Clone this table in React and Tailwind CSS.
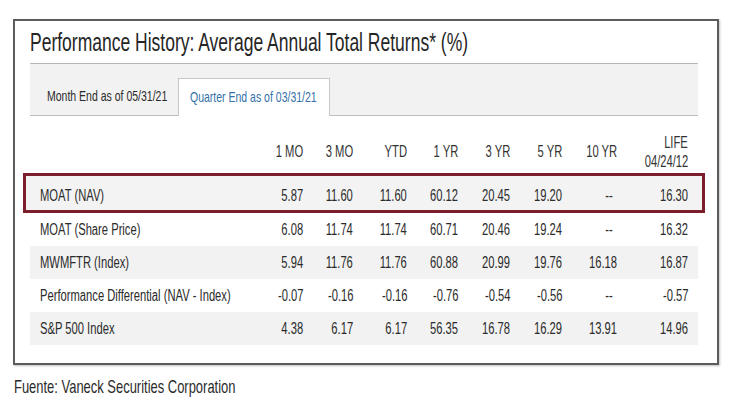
const columns = ["1 MO", "3 MO", "YTD", "1 YR", "3 YR", "5 YR", "10 YR"];

const rows = [
  { label: "MOAT (NAV)", values: ["5.87", "11.60", "11.60", "60.12", "20.45", "19.20", "--", "16.30"], highlight: true },
  { label: "MOAT (Share Price)", values: ["6.08", "11.74", "11.74", "60.71", "20.46", "19.24", "--", "16.32"] },
  { label: "MWMFTR (Index)", values: ["5.94", "11.76", "11.76", "60.88", "20.99", "19.76", "16.18", "16.87"], shaded: true },
  { label: "Performance Differential (NAV - Index)", values: ["-0.07", "-0.16", "-0.16", "-0.76", "-0.54", "-0.56", "--", "-0.57"] },
  { label: "S&P 500 Index", values: ["4.38", "6.17", "6.17", "56.35", "16.78", "16.29", "13.91", "14.96"], shaded: true },
];

const grid = "grid grid-cols-[213px_50px_50px_54px_51px_52px_52px_55px_71px] items-center";

// the screenshot's type is a horizontally squeezed Arial
function Sq({ children, right }) {
  return (
    <span
      className={`inline-block whitespace-nowrap scale-x-[0.7] ${right ? "origin-right" : "origin-left"}`}
    >
      {children}
    </span>
  );
}

function Cells({ values }) {
  return values.map((v, i) => (
    <div key={i} className={`text-right ${v === "--" ? "pr-[4px]" : ""}`}>
      <Sq right>{v}</Sq>
    </div>
  ));
}

export default function App() {
  return (
    <div className="w-[730px] h-[410px] bg-white overflow-hidden font-['Liberation_Sans',Arial,sans-serif] text-[#2b2b2b]">
      <div className="ml-[13px] mt-[19px] w-[706px] h-[346px] border-2 border-[#5c5c5c] pl-[15px] pr-[19px] shadow-[1px_1px_2px_rgba(0,0,0,0.25)]">
        {/* Title */}
        <div className="pt-[7px] pb-[7px] border-b border-[#b5b5b5]">
          <h2 className="text-[25px] leading-[28px] text-[#262626]">
            <Sq>Performance History: Average Annual Total Returns* (%)</Sq>
          </h2>
        </div>

        {/* Tabs */}
        <div className="h-[52px] bg-[#f2f2f2] border-b border-[#bdbdbd] flex items-end text-[15px]">
          <div className="w-[148px] h-[37px] pl-[17px] flex items-center text-[#2b2b2b]">
            <Sq>Month End as of 05/31/21</Sq>
          </div>
          <div className="w-[152px] h-[38px] -mb-px pl-[11px] flex items-center bg-white border border-b-0 border-[#c8c8c8] text-[#3470a8]">
            <Sq>Quarter End as of 03/31/21</Sq>
          </div>
        </div>

        {/* Table */}
        <div className="text-[16px]">
          <div className={`${grid} h-[57px] pt-[14px] pl-[10px] text-[#333]`}>
            <div />
            {columns.map((c) => (
              <div key={c} className="text-right">
                <Sq right>{c}</Sq>
              </div>
            ))}
            <div className="text-right leading-[19px]">
              <div>
                <Sq right>LIFE</Sq>
              </div>
              <div>
                <Sq right>04/24/12</Sq>
              </div>
            </div>
          </div>

          {rows.map((r) =>
            r.highlight ? (
              <div
                key={r.label}
                className={`${grid} -mx-[7px] h-[40px] pt-[5px] pl-[14px] border-[3px] border-[#7c1e2c] bg-[#f3f3f3]`}
              >
                <div>
                  <Sq>{r.label}</Sq>
                </div>
                <Cells values={r.values} />
              </div>
            ) : (
              <div
                key={r.label}
                className={`${grid} h-[33px] pl-[10px] ${r.shaded ? "bg-[#f2f2f2]" : ""}`}
              >
                <div>
                  <Sq>{r.label}</Sq>
                </div>
                <Cells values={r.values} />
              </div>
            )
          )}
        </div>
      </div>

      <div className="ml-[14px] mt-[12px] text-[18.5px] leading-[20px] text-[#2b2b2b]">
        <Sq>Fuente: Vaneck Securities Corporation</Sq>
      </div>
    </div>
  );
}
